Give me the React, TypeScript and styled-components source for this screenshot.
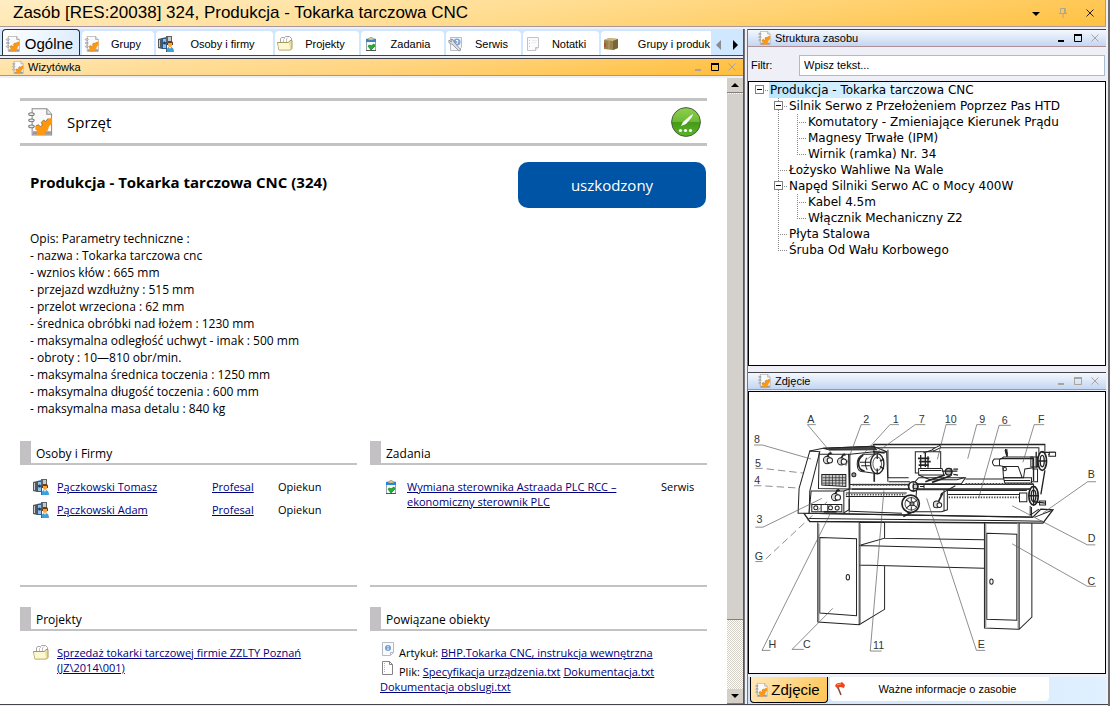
import React from 'react';
import styled, { createGlobalStyle, css } from 'styled-components';

const ui = '"Liberation Sans", Arial, sans-serif';
const doc = '"Open Sans", "Noto Sans", sans-serif';

const GlobalStyle = createGlobalStyle`
  * { box-sizing: border-box; }
  body { margin: 0; background: #efeff7; color: #000; font-family: ${ui}; font-size: 11px; }
  button { font: inherit; color: inherit; border: 0; padding: 0; background: none; }
  ul, h1, h2, h3, p { margin: 0; padding: 0; list-style: none; font-weight: normal; }
  svg { display: block; flex: none; }
`;

/* ---------- window frame ---------- */

const Window = styled.div`
  display: flex;
  flex-direction: column;
  height: 100vh;
  min-height: 704px;
  border-right: 2px solid #6b6b70;
  background: #efeff7;
`;

const TitleBar = styled.header`
  display: flex;
  align-items: center;
  flex: none;
  height: 27px;
  margin-right: 2px;
  padding: 0 9px 0 13px;
  border: 1px solid #a8989c;
  border-width: 0 1px 1px 0;
  background: linear-gradient(172deg, #ffedc4, #ffdd92 45%, #ffc142);
`;

const WindowTitle = styled.h1`
  flex: 1;
  font-size: 17px;
  line-height: 24px;
  white-space: nowrap;
`;

const TitleTools = styled.div`
  display: flex;
  gap: 15px;
`;

const Panes = styled.main`
  display: grid;
  grid-template-columns: minmax(0, 1fr) 364px;
  flex: 1;
  min-height: 0;
  padding-top: 2px;
`;

const BottomEdge = styled.div`
  display: flex;
  flex: none;
  height: 2px;
  border-top: 1px solid #44444a;
  background: #efeff7;
`;

const Pane = styled.section`
  display: flex;
  flex-direction: column;
  min-width: 0;
  min-height: 0;
`;

const MainPane = styled(Pane)`
  border-right: 1px solid #55555a;
`;

const SidePane = styled(Pane)`
  padding-right: 2px;
  border-left: 4px double #77777c;
`;

const PaneBar = styled.div<{ $warm?: boolean }>`
  display: flex;
  align-items: center;
  flex: none;
  height: 18px;
  padding: 0 5px 0 ${p => (p.$warm ? 12 : 10)}px;
  gap: 4px;
  border-top: 1px solid #44444a;
  border-bottom: 1px solid #b09098;
  background: ${p => (p.$warm
    ? 'linear-gradient(172deg, #ffe6b0, #ffd582 50%, #ffbe3c)'
    : 'linear-gradient(#f4f8fd, #c3d6f2)')};
`;

const PaneTitle = styled.h2`
  flex: 1;
  font-size: 11px;
  line-height: 16px;
`;

const PaneTools = styled.div`
  display: flex;
  gap: 5px;
`;

const ToolButton = styled.button`
  display: grid;
  place-items: center;
  width: 12px;
  height: 12px;
`;

/* ---------- tabs ---------- */

const TabStrip = styled.div`
  display: flex;
  align-items: flex-end;
  flex: none;
  height: 27px;
  margin-bottom: 2px;
  padding-left: 2px;
  border-bottom: 1px solid #44444a;
  background: #cfe7ff;
`;

const TabList = styled.div`
  display: flex;
  align-items: flex-end;
  flex: 1;
  gap: 2px;
  min-width: 0;
  overflow: hidden;
`;

const Tab = styled.button<{ $width: number; $active?: boolean }>`
  display: flex;
  align-items: center;
  flex: none;
  width: ${p => p.$width}px;
  height: 24px;
  padding: 2px 2px 0;
  border-radius: 4px 4px 0 0;
  background: #fff;
  white-space: nowrap;
  &:last-child { border-radius: 4px 0 0 0; padding-right: 1px; }
  &:last-child span { text-align: right; }
  ${p => p.$active && css`
    height: 26px;
    border: 1px solid #22303a;
    border-bottom: 0;
    background: linear-gradient(100deg, #fff, #dcecfc);
    font-size: 15px;
  `}
`;

const TabLabel = styled.span`
  flex: 1;
  text-align: center;
`;

const TabScroll = styled.div`
  display: flex;
  align-items: center;
  justify-content: space-around;
  width: 32px;
  height: 20px;
`;

/* ---------- card ---------- */

const Viewport = styled.div`
  display: flex;
  flex: 1;
  min-height: 0;
  padding-top: 2px;
`;

const Card = styled.article`
  flex: 1;
  min-width: 0;
  padding: 20px 20px 0;
  overflow: hidden;
  background: #fff;
  font-family: ${doc};
  font-size: 12px;
  line-height: 17px;
`;

const KindHeader = styled.div`
  display: flex;
  align-items: center;
  gap: 14px;
  height: 48px;
  padding: 0 6px 0 8px;
  border: solid #c3c3c3;
  border-width: 3px 0;
`;

const KindName = styled.h2`
  flex: 1;
  font-size: 15px;
`;

const Summary = styled.div`
  display: flex;
  align-items: flex-start;
  justify-content: space-between;
  padding: 16px 1px 0 10px;
`;

const AssetName = styled.h3`
  padding-top: 12px;
  font-size: 15px;
  font-weight: 700;
`;

const StatusButton = styled.button`
  width: 188px;
  height: 46px;
  border-radius: 10px;
  background: #0054a6;
  color: #fff;
  font-size: 15px;
`;

const Description = styled.p`
  padding: 22px 10px 24px;
  white-space: pre-line;
`;

const Sections = styled.div`
  display: grid;
  grid-template-columns: 1fr 1fr;
  column-gap: 13px;
`;

const SectionBox = styled.section<{ $ruled?: boolean }>`
  min-height: 146px;
  margin-bottom: 20px;
  border-bottom: ${p => (p.$ruled ? '2px solid #c3c3c3' : '0')};
`;

const SectionTitle = styled.h3`
  height: 24px;
  padding: 4px 0 0 5px;
  border-left: 11px solid #c4c1c4;
  border-bottom: 2px solid #c3c3c3;
  font-size: 12px;
`;

const Records = styled.table`
  width: 100%;
  margin-top: 10px;
  border-collapse: collapse;
  table-layout: fixed;
  font-size: 11px;
  line-height: 15px;
`;

const Cell = styled.td<{ $width?: number }>`
  width: ${p => (p.$width ? `${p.$width}px` : 'auto')};
  padding: 4px 0 3px;
  vertical-align: top;
`;

const IconCell = styled(Cell)`
  padding-left: 13px;
`;

const Link = styled.a`
  color: #000080;
  text-decoration: underline;
`;

const Related = styled.div`
  padding: 10px 20px 0 10px;
  font-size: 11px;
  line-height: 15px;
`;

const RelatedLine = styled.p`
  svg { display: inline-block; margin-right: 3px; }
`;

/* ---------- scrollbar ---------- */

const ScrollBar = styled.div`
  display: flex;
  flex-direction: column;
  flex: none;
  width: 16px;
  background: repeating-conic-gradient(#d4d0c8 0 25%, #fff 0 50%) 0 0 / 2px 2px;
`;

const ScrollArrow = styled.button`
  display: grid;
  place-items: center;
  height: 15px;
  background: #d4d0c8;
  border-bottom: 1px solid #808080;
`;

const ScrollThumb = styled.div`
  flex: 525;
  margin-top: 1px;
  border-bottom: 1px solid #808080;
  background: #d4d0cc;
`;

const ScrollRest = styled.div`
  flex: 69;
`;

/* ---------- side panels ---------- */

const FilterRow = styled.label`
  display: flex;
  align-items: center;
  flex: none;
  height: 34px;
  padding: 2px 1px 0 3px;
`;

const FilterName = styled.span`
  width: 48px;
`;

const FilterInput = styled.input`
  flex: 1;
  min-width: 0;
  height: 21px;
  padding: 0 4px;
  border: 1px solid #a9bdd2;
  background: #fff;
  font: 11px ${ui};
  &::placeholder { color: #000; opacity: 1; }
`;

const Tree = styled.ul`
  flex: none;
  height: 285px;
  padding: 0 1px;
  border: 1px solid #000;
  background: #fff;
  font-family: "DejaVu Sans", Verdana, sans-serif;
  font-size: 12px;
`;

const TreeRow = styled.li`
  display: flex;
  height: 16px;
  line-height: 16px;
  white-space: nowrap;
`;

const TreeLabel = styled.span<{ $selected?: boolean }>`
  padding-left: 1px;
  background: ${p => (p.$selected ? 'linear-gradient(90deg, #b9e6ff, #fff)' : 'none')};
`;

type GuideKind = 'none' | 'line' | 'tee' | 'end' | 'root';
const dotsV = 'repeating-linear-gradient(#888 0 1px, transparent 1px 2px)';
const dotsH = 'repeating-linear-gradient(90deg, #888 0 1px, transparent 1px 2px)';
const guides: Record<GuideKind, string> = {
  none: 'none',
  line: `${dotsV} 9px 0 / 1px 16px no-repeat`,
  tee: `${dotsV} 9px 0 / 1px 16px no-repeat, ${dotsH} 9px 8px / 10px 1px no-repeat`,
  end: `${dotsV} 9px 0 / 1px 8px no-repeat, ${dotsH} 9px 8px / 10px 1px no-repeat`,
  root: `${dotsH} 9px 8px / 10px 1px no-repeat`,
};

const Guide = styled.span<{ $kind: GuideKind }>`
  flex: none;
  width: 19px;
  padding: 3px 0 0 5px;
  background: ${p => guides[p.$kind]};
`;

const Toggle = styled.button`
  display: block;
  width: 9px;
  height: 9px;
  border: 1px solid #808080;
  background: linear-gradient(#000, #000) center / 5px 1px no-repeat #fff;
`;

const Photo = styled.figure`
  display: flex;
  flex: 1;
  min-height: 0;
  margin: 1px 0 3px;
  border: 1px solid #000;
  background: #fff;
  svg { width: 100%; height: 100%; }
`;

const PhotoPane = styled.div`
  display: flex;
  flex-direction: column;
  flex: 1;
  min-height: 0;
  padding-top: 6px;
`;

const BottomTabs = styled.div`
  display: flex;
  flex: none;
  gap: 2px;
  height: 27px;
  padding-left: 2px;
  background: linear-gradient(90deg, #cfe3fa, #dff0ff);
`;

const BottomTab = styled.button<{ $width: number; $active?: boolean }>`
  display: flex;
  align-items: center;
  width: ${p => p.$width}px;
  height: 24px;
  padding: 0 4px;
  border-radius: 0 0 4px 4px;
  background: #fff;
  ${p => p.$active && css`
    height: 26px;
    border: 1px solid #000;
    border-width: 0 1px 1px;
    background: linear-gradient(120deg, #ffe9bb, #ffc553);
    font-size: 15px;
  `}
`;

/* ---------- icons ---------- */

const GearPage = ({ w = 16, h = 16 }: { w?: number; h?: number }) => (
  <svg width={w} height={h} viewBox="84 55 71 82" aria-hidden="true">
    <path d="M95 57h43l14 16v61H95z" fill="#fafafa" stroke="#8b8b8b" strokeWidth="3" />
    <path d="M138 57v16h14" fill="#e4e4e4" stroke="#8b8b8b" strokeWidth="3" />
    <path d="M97 123h53v10H97z" fill="#9a9a9a" />
    <path d="M107 134l5-10-8-6 1-10 8-4 6 5 6-3-3-9 7-7 6 5 6-9 12-2v18l-8 6-4 13-9 4v9z" fill="#ff9710" />
    <path d="M105 108l8-4 6 5 6-3-3-9 7-7 6 5 6-9" fill="none" stroke="#7d5a2c" strokeWidth="2" />
    {[73, 91, 109].map(y => (
      <ellipse key={y} cx="93" cy={y} rx="8" ry="4" fill="#eee" stroke="#777" strokeWidth="3" />
    ))}
  </svg>
);

const PeopleIcon = () => (
  <svg width="16" height="16" viewBox="0 0 16 16" aria-hidden="true">
    <path d="M0 3l4-1v11l-4-1z" fill="#55585c" />
    <path d="M1 4h1v7H1z" fill="#c9ced3" />
    <path d="M4 2l5-1v12l-5 0z" fill="#2d5a86" />
    <path d="M5 3h3v9H5z" fill="#8fc3ec" />
    <circle cx="6.500" cy="7" r="1.500" fill="#1f3f66" />
    <path d="M8 0h6v6H8z" fill="#5f6368" />
    <path d="M10 1h3v4h-3z" fill="#c5cacf" />
    <path d="M8 13h3v3H8z" fill="#55585c" />
    <path d="M9 9V7q0-2 3-2t3 2v2z" fill="#6a3b12" />
    <path d="M10 7h4v2q0 2-2 2t-2-2z" fill="#ffa12e" />
    <path d="M9 16q-1-5 3-5t4 5z" fill="#3da0dc" />
    <path d="M11 11h2l-1 2z" fill="#fff" />
  </svg>
);

const FolderIcon = () => (
  <svg width="16" height="16" viewBox="0 0 16 16" aria-hidden="true">
    <path d="M3.500 6V3l1-1.500h3l1-1h4l2 2V9h-11z" fill="#fff" stroke="#a5a5a5" />
    <path d="M6.500 6V3.500L8 2M9.500 6V3L11 1.500" fill="none" stroke="#c0c0c0" />
    <path d="M.5 6.500h11l1.500-2h2v8l-1.500 1.500H2z" fill="#e9dfa0" stroke="#a3995f" />
    <path d="M1 7h11l1 6.500H2z" fill="#fdf8d2" />
  </svg>
);

const ClipboardIcon = () => (
  <svg width="16" height="16" viewBox="0 0 16 16" aria-hidden="true">
    <path d="M3.500 3v11.500h9V3z" fill="#f4f8fb" stroke="#9aa2aa" />
    <path d="M3 14.500h10" stroke="#555" />
    <path d="M3 3h10v3H3z" fill="#2389e0" />
    <path d="M5 4l1-2h1q1-2 2 0h1l1 2z" fill="#ddcc98" stroke="#8a7a4a" strokeWidth="0.500" />
    <path d="M5 10l2-1 1 1 3-2 1 2-4 4z" fill="#17b82a" stroke="#087a12" strokeWidth="0.700" />
  </svg>
);

const ServiceIcon = () => (
  <svg width="16" height="16" viewBox="0 0 16 16" aria-hidden="true">
    <path d="M2.500 1.500h11v10l-3 3h-8z" fill="#f2f5fa" stroke="#b7bcc6" />
    <circle cx="9" cy="6" r="3.500" fill="#7ea6dc" />
    <path d="M8 5q1-2 2 0l-1 2v1" fill="none" stroke="#fff" />
    <path d="M1 4q-1 4 3 4l7 7 2-1-7-8q0-3-3-3l1 2-1 1z" fill="#dcdde1" stroke="#85888f" strokeWidth="0.800" />
  </svg>
);

const NoteIcon = () => (
  <svg width="16" height="16" viewBox="0 0 16 16" aria-hidden="true">
    <path d="M2.500 1.500h11v10l-3 3h-8z" fill="#fbfbfb" stroke="#c2c2c6" />
    <path d="M13.500 11.500h-3v3" fill="#e6e6e6" stroke="#c2c2c6" />
    <path d="M4 4.500h1M4 7.500h1M4 10.500h1" stroke="#c4c4c8" />
    <path d="M7 4.500h5M7 6.500h4" stroke="#ececf0" />
  </svg>
);

const BoxIcon = () => (
  <svg width="16" height="16" viewBox="0 0 16 16" aria-hidden="true">
    <path d="M1 4l5-2 9 1v9l-5 2-9-1z" fill="#9a8250" />
    <path d="M1 4l5-2 9 1-5 2z" fill="#cdb984" />
    <path d="M10 5l5-2v9l-5 2z" fill="#7a6438" />
    <path d="M6 4v9" stroke="#b7a06a" />
    <path d="M2 7v4" stroke="#b52a1a" />
  </svg>
);

const FlagIcon = () => (
  <svg width="16" height="16" viewBox="0 0 16 16" aria-hidden="true">
    <path d="M3 4l4 10" stroke="#7d4a3a" strokeWidth="1.500" />
    <path d="M1 5q1-3 4-3 2 0 3-1l3 3-1 3q-3-1-4-1t-2 2z" fill="#f0421c" />
    <path d="M3 4q2-1 4-1" stroke="#ff9a70" fill="none" />
  </svg>
);

const ArticleIcon = () => (
  <svg width="16" height="16" viewBox="0 0 16 16" aria-hidden="true">
    <path d="M2.500 1.500h11v10l-3 3h-8z" fill="#fafafa" stroke="#b5b9c0" />
    <path d="M13 11.500h-2.500V14" fill="none" stroke="#b5b9c0" />
    <circle cx="8" cy="7" r="3" fill="#6f9fd8" />
    <path d="M8 6.500V9M8 5v1" stroke="#fff" />
  </svg>
);

const FileIcon = () => (
  <svg width="16" height="16" viewBox="0 0 16 16" aria-hidden="true">
    <path d="M2.500 1.500h7l3 3v10h-10z" fill="#fff" stroke="#858585" />
    <path d="M9.500 1.500v3h3" fill="none" stroke="#858585" />
    <path d="M4.500 3v10" stroke="#b5b5b5" strokeDasharray="1 1" />
  </svg>
);

const EditBadge = () => (
  <svg width="30" height="30" viewBox="0 0 30 30" aria-hidden="true">
    <defs>
      <linearGradient id="green" x1="0" y1="0" x2="0" y2="1">
        <stop offset="0" stopColor="#8fd04e" />
        <stop offset="0.480" stopColor="#6cbb34" />
        <stop offset="0.520" stopColor="#459b18" />
        <stop offset="1" stopColor="#5cb528" />
      </linearGradient>
    </defs>
    <circle cx="15" cy="15" r="14.400" fill="url(#green)" stroke="#4c5f44" />
    <path d="M10 19l2-4 7-6 3-2-1 3-6 7z" fill="#fff" />
    {[9, 14, 19].map(x => <circle key={x} cx={x + 0.5} cy="23.500" r="1.600" fill="#fff" />)}
  </svg>
);

const Minimise = ({ color }: { color: string }) => (
  <svg width="12" height="12" viewBox="0 0 12 12"><path d="M3 8h6v2H3z" fill={color} /></svg>
);
const Maximise = ({ color }: { color: string }) => (
  <svg width="12" height="12" viewBox="0 0 12 12">
    <path d="M2.500 2.500h7v7h-7z" fill="none" stroke={color} /><path d="M2 2h8v2H2z" fill={color} />
  </svg>
);
const Close = ({ color }: { color: string }) => (
  <svg width="12" height="12" viewBox="0 0 12 12">
    <path d="M2.500 2.500l7 7M9.500 2.500l-7 7" stroke={color} />
  </svg>
);
const Pin = () => (
  <svg width="12" height="12" viewBox="0 0 12 12">
    <path d="M3.500 6V1.500h5V6M2 6.500h8M6 7v4" fill="none" stroke="#b3a68c" /><path d="M7 1h1v5H7z" fill="#b3a68c" />
  </svg>
);
const Arrow = ({ d, color = '#000' }: { d: string; color?: string }) => (
  <svg width="10" height="10" viewBox="0 0 10 10"><path d={d} fill={color} /></svg>
);

/* ---------- lathe drawing ---------- */

const callouts: [string, number, number, string, boolean?][] = [
  ['A', 213, 176, 'M228 181H203L280 272'],
  ['2', 379, 176, 'M391 181H364L318 305'],
  ['1', 467, 176, 'M477 181H450L368 272'],
  ['7', 545, 176, 'M556 181H526L382 284'],
  ['10', 632, 176, 'M649 181H618L592 285'],
  ['9', 726, 176, 'M738 181H710L683 283'],
  ['6', 794, 178, 'M812 183H777L716 400'],
  ['F', 903, 176, 'M912 181H882L848 294'],
  ['8', 52, 236, 'M43 242H68L214 284'],
  ['5', 55, 309, 'M47 312H68L190 326', true],
  ['4', 53, 360, 'M43 364H66L178 371', true],
  ['3', 59, 477, 'M47 488H70L246 402'],
  ['G', 58, 587, 'M47 591H70L262 412', true],
  ['B', 1053, 342, 'M1067 352H1042L908 446'],
  ['D', 1054, 533, 'M1065 541H1041L816 424'],
  ['C', 1053, 661, 'M1067 665H1041L816 538'],
  ['H', 98, 849, 'M92 857H67L276 438'],
  ['C', 201, 849, 'M192 854H157L279 731'],
  ['11', 416, 854, 'M425 859H391L432 378'],
  ['E', 724, 849, 'M735 857H709L560 402'],
];

const Lathe = () => (
  <svg viewBox="28 84 1066 840" role="img" aria-label="Tokarka" fill="none" stroke="#222" strokeWidth="3">
    {/* cabinets and shelf */}
    <path d="M234 474V772L358 780L434 734V604M358 474V780M434 474V521L358 543M358 543L732 553M434 521L732 526M358 601L732 611M358 474H434" />
    <path d="M240 519L350 523V753L240 745z" />
    <path d="M237 478V772M361 478V776" stroke="#777" />
    <path d="M733 474V790L837 794L875 757V474M837 474V794M740 506L830 509V767L740 764z" />
    <path d="M737 478V788M834 478V792" stroke="#777" />
    <ellipse cx="324" cy="638" rx="5" ry="8" />
    <ellipse cx="754" cy="651" rx="5" ry="8" />
    {/* tray */}
    <path d="M192 446L210 471L908 476L938 436L902 434L878 458z" fill="#fff" strokeWidth="4" />
    <path d="M192 446L520 452L878 458M206 462L908 470M884 458L934 438M874 428V456" />
    {/* splash guard */}
    <path d="M402 240H914V262M402 250H896V270M444 256V340M402 240V352" />
    <path d="M400 241H914" strokeWidth="4" />
    <path d="M444 340H506M676 344H790M446 352H510" />
    {/* headstock */}
    <path d="M210 260L178 372L175 446H208L210 380L240 262z" fill="#fff" />
    <path d="M210 260L250 252L400 246L440 262L444 352M240 270H330L404 262L438 264M238 266L236 372L330 374V268M326 268L328 372M404 264V352" />
    <path d="M250 252L400 246L410 256L270 257z" fill="#444" />
    <path d="M246 330H318V366L246 362z" fill="#ccc" />
    <path d="M248 340H318M248 348H318M248 356H318M258 332V364M268 332V364M278 332V364M288 332V364M298 332V364M308 332V364" strokeWidth="2" />
    {[[262, 287], [304, 291], [286, 398]].map(([x, y]) => (
      <g key={x}>
        <circle cx={x} cy={y} r="11" fill="#ddd" strokeWidth="3" />
        <circle cx={x + 8} cy={y + 1} r="8" fill="#fff" />
        <path d={`M${x} ${y - 10}l8-12M${x + 8} ${y - 22}l5 4`} strokeWidth="5" />
      </g>
    ))}
    <circle cx="342" cy="331" r="6" fill="#999" />
    {/* chuck */}
    <path d="M414 270H370Q352 276 352 300T372 322L414 328" fill="#fff" />
    <path d="M370 272Q354 282 356 300T374 320" strokeWidth="5" />
    <path d="M380 280Q372 298 382 316M360 294H392M364 304H390" />
    <ellipse cx="412" cy="298" rx="20" ry="30" fill="#fff" strokeWidth="4" />
    <ellipse cx="412" cy="298" rx="13" ry="20" stroke="#666" />
    <path d="M412 270V284M412 312V326M420 290L432 284M420 306L432 314M400 262L434 266" strokeWidth="4" />
    {/* gear box */}
    <path d="M214 380H312L328 374V436L310 446H208z" fill="#fff" />
    <path d="M312 380V444M216 420H306V442H216zM244 420V442M264 420V442" />
    <circle cx="228" cy="430" r="6" /><circle cx="272" cy="430" r="6" /><circle cx="292" cy="431" r="6" />
    <path d="M252 442L290 442" strokeWidth="5" />
    <circle cx="286" cy="398" r="11" fill="#ddd" strokeWidth="3" />
    <circle cx="294" cy="399" r="8" fill="#fff" />
    <path d="M286 388l8-12M294 376l5 4" strokeWidth="5" />
    {/* bed, racks and screws */}
    <path d="M330 360H880V374H330z" fill="#fff" />
    <path d="M338 361H506M676 359H880" stroke="#444" strokeWidth="6" strokeDasharray="6 3" />
    <path d="M336 374H880" strokeWidth="4" />
    <path d="M318 386H500M624 378H860M318 396H500M624 390H840" />
    <path d="M318 391H496M610 399H836" stroke="#444" strokeWidth="5" strokeDasharray="4 4" />
    <path d="M328 404V444M330 440L486 446" />
    {/* carriage */}
    <path d="M536 340H676L664 358H520z" fill="#fff" strokeWidth="3" />
    <path d="M530 376H622V436L604 442H524z" fill="#fff" />
    <path d="M612 376V440" />
    <path d="M526 262H602V326H526z" />
    <path d="M536 312H606L612 332H536z" fill="#fff" />
    <path d="M540 318H604M536 332L570 346H650L672 340" />
    <path d="M556 352L614 332M576 354L632 334" strokeWidth="5" />
    <path d="M534 282H568M538 292H572M536 302H566" strokeWidth="5" />
    <path d="M542 272V310M556 266V308M564 276V310" strokeWidth="4" />
    <path d="M550 266L574 258L600 244" />
    <path d="M578 258L602 246" strokeWidth="9" /><path d="M580 257L600 247" stroke="#fff" strokeWidth="4" />
    <circle cx="626" cy="322" r="10" fill="#bbb" strokeWidth="4" />
    <path d="M606 320H652M634 312V334M640 314L654 314M640 330L654 332" strokeWidth="4" />
    <circle cx="520" cy="366" r="14" fill="#fff" strokeWidth="5" /><circle cx="526" cy="366" r="7" fill="#ccc" />
    <path d="M520 354V380M540 366H552M552 360V372" />
    <circle cx="512" cy="418" r="26" fill="#fff" strokeWidth="5" />
    <circle cx="514" cy="418" r="19" stroke="#555" /><circle cx="516" cy="418" r="6" fill="#888" />
    <path d="M514 398V410M514 426V438M498 406L510 414M522 422L532 430M498 432L510 422M522 414L532 406" />
    <path d="M514 444L490 456" strokeWidth="5" />
    <circle cx="590" cy="420" r="10" fill="#ddd" strokeWidth="3" />
    <path d="M596 410L608 386M606 386L602 394" strokeWidth="5" /><path d="M606 386L646 364" />
    <circle cx="598" cy="422" r="7" fill="#fff" />
    {/* tailstock */}
    <path d="M762 284H782L790 278H878V310L854 314L850 340H790L788 306L780 304H762Q752 294 762 284z" fill="#fff" />
    <path d="M778 284V304M788 306H834L846 340M790 340H874V356H794zM792 348H870" />
    <path d="M780 283H878" strokeWidth="4" />
    <circle cx="794" cy="314" r="5" /><path d="M800 278L796 254M802 276L800 254" />
    <path d="M796 256L800 270" strokeWidth="6" />
    <path d="M872 278H892V308H872zM876 314H892V352H872" />
    <path d="M880 280V350M888 262V310" strokeWidth="4" />
    <ellipse cx="906" cy="290" rx="13" ry="28" fill="#fff" strokeWidth="5" />
    <ellipse cx="906" cy="290" rx="6" ry="17" strokeWidth="4" />
    <path d="M892 290H920M906 264H944M924 270H944" strokeWidth="4" />
    <path d="M928 264H946V276H926z" fill="#fff" />
    <path d="M914 318L902 390" strokeWidth="4" />
    <path d="M838 386H860V412H838z" fill="#fff" />
    <ellipse cx="880" cy="394" rx="14" ry="28" fill="#fff" strokeWidth="5" />
    <ellipse cx="880" cy="394" rx="7" ry="17" strokeWidth="4" />
    <path d="M866 394H894M880 366V422M882 412L916 416" strokeWidth="4" />
    <path d="M898 410H916V422H898zM870 424V452L896 434" />
    {callouts.map(([label, x, y, d, dashed]) => (
      <g key={d}>
        <path d={d} stroke="#555" strokeWidth="2" strokeDasharray={dashed ? '22 12' : undefined} />
        <text x={x} y={y} textAnchor="middle" fontSize="32" fontFamily="Liberation Sans, sans-serif" fill="#333" stroke="none">
          {label}
        </text>
      </g>
    ))}
  </svg>
);

/* ---------- data ---------- */

const tabs: [string, number, React.ReactNode][] = [
  ['Grupy', 72, <GearPage />],
  ['Osoby i firmy', 117, <PeopleIcon />],
  ['Projekty', 84, <FolderIcon />],
  ['Zadania', 83, <ClipboardIcon />],
  ['Serwis', 75, <ServiceIcon />],
  ['Notatki', 76, <NoteIcon />],
  ['Grupy i produk', 110, <BoxIcon />],
];

const description = `Opis: Parametry techniczne :
- nazwa : Tokarka tarczowa cnc
- wznios kłów : 665 mm
- przejazd wzdłużny : 515 mm
- przelot wrzeciona : 62 mm
- średnica obróbki nad łożem : 1230 mm
- maksymalna odległość uchwyt - imak : 500 mm
- obroty : 10—810 obr/min.
- maksymalna średnica toczenia : 1250 mm
- maksymalna długość toczenia : 600 mm
- maksymalna masa detalu : 840 kg`;

const tree: [string, GuideKind[], boolean?][] = [
  ['Produkcja - Tokarka tarczowa CNC', ['root'], true],
  ['Silnik Serwo z Przełożeniem Poprzez Pas HTD', ['none', 'tee'], true],
  ['Komutatory - Zmieniające Kierunek Prądu', ['none', 'line', 'tee']],
  ['Magnesy Trwałe (IPM)', ['none', 'line', 'tee']],
  ['Wirnik (ramka) Nr. 34', ['none', 'line', 'end']],
  ['Łożysko Wahliwe Na Wale', ['none', 'tee']],
  ['Napęd Silniki Serwo AC o Mocy 400W', ['none', 'tee'], true],
  ['Kabel 4.5m', ['none', 'line', 'tee']],
  ['Włącznik Mechaniczny Z2', ['none', 'line', 'end']],
  ['Płyta Stalowa', ['none', 'tee']],
  ['Śruba Od Wału Korbowego', ['none', 'end']],
];

const Tools = ({ min, max }: { min: string; max: string }) => (
  <PaneTools>
    <ToolButton aria-label="Minimalizuj"><Minimise color={min} /></ToolButton>
    <ToolButton aria-label="Maksymalizuj"><Maximise color={max} /></ToolButton>
    <ToolButton aria-label="Zamknij"><Close color="#a9a49c" /></ToolButton>
  </PaneTools>
);

export default function App() {
  return (
    <Window>
      <GlobalStyle />
      <TitleBar>
        <WindowTitle>Zasób [RES:20038] 324, Produkcja - Tokarka tarczowa CNC</WindowTitle>
        <TitleTools>
          <ToolButton aria-label="Menu"><Arrow d="M1 4h8L5 8z" /></ToolButton>
          <ToolButton aria-label="Przypnij"><Pin /></ToolButton>
          <ToolButton aria-label="Zamknij"><Close color="#222" /></ToolButton>
        </TitleTools>
      </TitleBar>
      <Panes>
        <MainPane>
          <TabStrip>
            <TabList role="tablist">
              <Tab role="tab" aria-selected="true" $active $width={78}>
                <GearPage />
                <TabLabel>Ogólne</TabLabel>
              </Tab>
              {tabs.map(([label, width, icon]) => (
                <Tab role="tab" key={label} $width={width}>
                  {icon}
                  <TabLabel>{label}</TabLabel>
                </Tab>
              ))}
            </TabList>
            <TabScroll>
              <ToolButton aria-label="Poprzednie"><Arrow d="M7 0v10L2 5z" color="#8a8a90" /></ToolButton>
              <ToolButton aria-label="Następne"><Arrow d="M3 0v10l5-5z" /></ToolButton>
            </TabScroll>
          </TabStrip>
          <PaneBar $warm>
            <GearPage w={12} h={13} />
            <PaneTitle>Wizytówka</PaneTitle>
            <Tools min="#a9a49c" max="#000" />
          </PaneBar>
          <Viewport>
            <Card>
              <KindHeader>
                <GearPage w={25} h={28} />
                <KindName>Sprzęt</KindName>
                <button aria-label="Edytuj"><EditBadge /></button>
              </KindHeader>
              <Summary>
                <AssetName>Produkcja - Tokarka tarczowa CNC (324)</AssetName>
                <StatusButton>uszkodzony</StatusButton>
              </Summary>
              <Description>{description}</Description>
              <Sections>
                <SectionBox $ruled>
                  <SectionTitle>Osoby i Firmy</SectionTitle>
                  <Records>
                    <tbody>
                      {['Pączkowski Tomasz', 'Pączkowski Adam'].map(name => (
                        <tr key={name}>
                          <IconCell $width={37}><PeopleIcon /></IconCell>
                          <Cell><Link href="#">{name}</Link></Cell>
                          <Cell $width={66}><Link href="#">Profesal</Link></Cell>
                          <Cell $width={79}>Opiekun</Cell>
                        </tr>
                      ))}
                    </tbody>
                  </Records>
                </SectionBox>
                <SectionBox $ruled>
                  <SectionTitle>Zadania</SectionTitle>
                  <Records>
                    <tbody>
                      <tr>
                        <IconCell $width={37}><ClipboardIcon /></IconCell>
                        <Cell>
                          <Link href="#">Wymiana sterownika Astraada PLC RCC –<br />ekonomiczny sterownik PLC</Link>
                        </Cell>
                        <Cell $width={46}>Serwis</Cell>
                      </tr>
                    </tbody>
                  </Records>
                </SectionBox>
                <SectionBox>
                  <SectionTitle>Projekty</SectionTitle>
                  <Records>
                    <tbody>
                      <tr>
                        <IconCell $width={37}><FolderIcon /></IconCell>
                        <Cell>
                          <Link href="#">Sprzedaż tokarki tarczowej firmie ZZLTY Poznań<br />(JZ\2014\001)</Link>
                        </Cell>
                      </tr>
                    </tbody>
                  </Records>
                </SectionBox>
                <SectionBox>
                  <SectionTitle>Powiązane obiekty</SectionTitle>
                  <Related>
                    <RelatedLine>
                      <ArticleIcon />Artykuł: <Link href="#">BHP.Tokarka CNC, instrukcja wewnętrzna</Link>
                    </RelatedLine>
                    <RelatedLine>
                      <FileIcon />Plik: <Link href="#">Specyfikacja urządzenia.txt</Link>{' '}
                      <Link href="#">Dokumentacja.txt</Link>{' '}
                      <Link href="#">Dokumentacja obslugi.txt</Link>
                    </RelatedLine>
                  </Related>
                </SectionBox>
              </Sections>
            </Card>
            <ScrollBar>
              <ScrollArrow aria-label="W górę"><Arrow d="M1 7h8L5 3z" /></ScrollArrow>
              <ScrollThumb />
              <ScrollRest />
              <ScrollArrow aria-label="W dół"><Arrow d="M1 3h8L5 7z" /></ScrollArrow>
            </ScrollBar>
          </Viewport>
        </MainPane>
        <SidePane>
          <PaneBar>
            <GearPage w={13} h={14} />
            <PaneTitle>Struktura zasobu</PaneTitle>
            <Tools min="#000" max="#000" />
          </PaneBar>
          <FilterRow>
            <FilterName>Filtr:</FilterName>
            <FilterInput placeholder="Wpisz tekst..." />
          </FilterRow>
          <Tree>
            {tree.map(([label, kinds, open], i) => (
              <TreeRow key={label}>
                {kinds.map((kind, k) => (
                  <Guide key={k} $kind={kind}>
                    {open && k === kinds.length - 1 && <Toggle aria-label="Zwiń" />}
                  </Guide>
                ))}
                <TreeLabel $selected={i === 0}>{label}</TreeLabel>
              </TreeRow>
            ))}
          </Tree>
          <PhotoPane>
            <PaneBar>
              <GearPage w={13} h={14} />
              <PaneTitle>Zdjęcie</PaneTitle>
              <Tools min="#a9a49c" max="#a9a49c" />
            </PaneBar>
            <Photo><Lathe /></Photo>
            <BottomTabs role="tablist">
              <BottomTab role="tab" aria-selected="true" $active $width={78}>
                <GearPage w={13} h={14} />
                <TabLabel>Zdjęcie</TabLabel>
              </BottomTab>
              <BottomTab role="tab" $width={219}>
                <FlagIcon />
                <TabLabel>Ważne informacje o zasobie</TabLabel>
              </BottomTab>
            </BottomTabs>
          </PhotoPane>
        </SidePane>
      </Panes>
      <BottomEdge />
    </Window>
  );
}
